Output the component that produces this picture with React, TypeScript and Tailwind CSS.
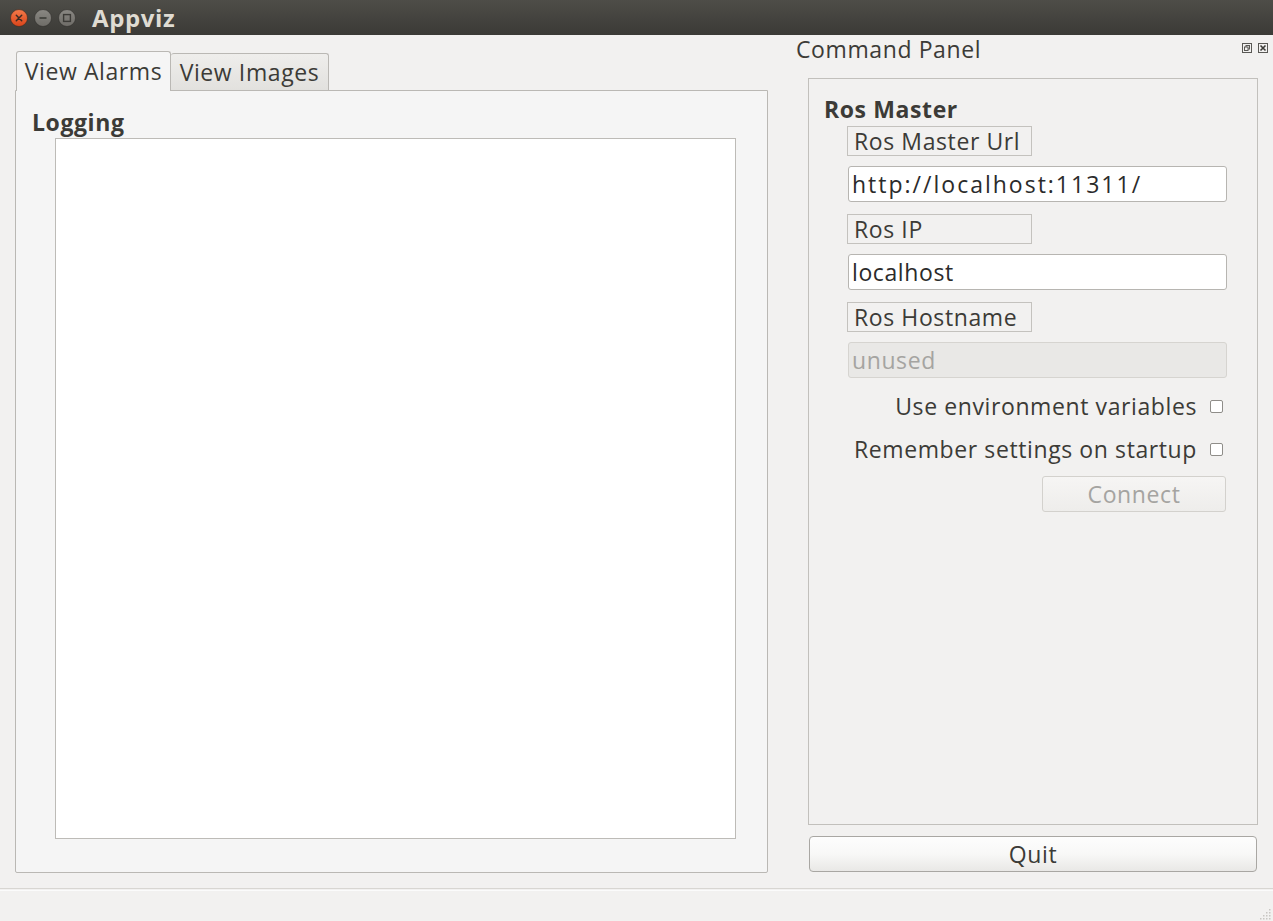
import React from "react";

const font = { fontFamily: '"Open Sans", "Noto Sans", "DejaVu Sans", sans-serif', letterSpacing: "0.6px" };

function TitleButtons() {
  return (
    <div className="flex items-center gap-[6px] pl-[10px]">
      <svg width="18" height="18" viewBox="0 0 18 18">
        <defs>
          <linearGradient id="cl" x1="0" y1="0" x2="0" y2="1">
            <stop offset="0" stopColor="#f47a4a" />
            <stop offset="1" stopColor="#d9441a" />
          </linearGradient>
        </defs>
        <circle cx="9" cy="9" r="8.5" fill="url(#cl)" stroke="#3a2a22" strokeWidth="0.6" />
        <path d="M6.3 6.3 L11.7 11.7 M11.7 6.3 L6.3 11.7" stroke="#3b2b24" strokeWidth="1.5" strokeLinecap="round" />
      </svg>
      <svg width="18" height="18" viewBox="0 0 18 18">
        <defs>
          <linearGradient id="gr" x1="0" y1="0" x2="0" y2="1">
            <stop offset="0" stopColor="#8a8883" />
            <stop offset="1" stopColor="#6e6c67" />
          </linearGradient>
        </defs>
        <circle cx="9" cy="9" r="8.5" fill="url(#gr)" stroke="#2f2e2a" strokeWidth="0.6" />
        <path d="M5.5 9 L12.5 9" stroke="#3c3b37" strokeWidth="1.6" />
      </svg>
      <svg width="18" height="18" viewBox="0 0 18 18">
        <circle cx="9" cy="9" r="8.5" fill="url(#gr)" stroke="#2f2e2a" strokeWidth="0.6" />
        <rect x="5.6" y="5.6" width="6.8" height="6.8" fill="none" stroke="#3c3b37" strokeWidth="1.4" />
      </svg>
    </div>
  );
}

function LabelBox({ text }: { text: string }) {
  return (
    <div className="ml-[38px] w-[185px] h-[30px] border border-[#c4c2be] flex items-center pl-[6px] text-[23px] text-[#3c3b37] leading-none">
      {text}
    </div>
  );
}

function Field({ value, disabled, spacing }: { value: string; disabled?: boolean; spacing?: string }) {
  return (
    <input
      readOnly
      value={value}
      disabled={disabled}
      className={
        "ml-[39px] w-[379px] h-[36px] rounded-[3px] border px-[3px] text-[23px] outline-none " +
        (disabled
          ? "bg-[#e9e8e6] border-[#d6d4d0] text-[#a5a4a1]"
          : "bg-white border-[#b7b5b1] text-[#2b2b2b]")
      }
      style={{ ...font, letterSpacing: spacing ?? font.letterSpacing }}
    />
  );
}

function CheckRow({ text }: { text: string }) {
  return (
    <div className="flex items-center justify-end pr-[34px] h-[30px]">
      <span className="text-[23px] text-[#3c3b37] leading-none">{text}</span>
      <span className="ml-[13px] w-[13px] h-[13px] rounded-[2px] border border-[#8f8d89] bg-white" />
    </div>
  );
}

export default function App() {
  return (
    <div className="w-[1273px] h-[921px] flex flex-col bg-[#f2f1f0] overflow-hidden" style={font}>
      {/* Title bar */}
      <div className="h-[35px] shrink-0 flex items-center bg-gradient-to-b from-[#4e4d48] to-[#3b3a36]">
        <TitleButtons />
        <span className="ml-[16px] text-[24px] font-bold text-[#dfdbd2] leading-none">Appviz</span>
      </div>

      {/* Main */}
      <div className="flex flex-1 min-h-0">
        {/* Left: tabs */}
        <div className="w-[768px] shrink-0 pl-[15px] pt-[16px] flex flex-col">
          <div className="flex items-end h-[39px]">
            <div className="relative z-10 -mb-px ml-px h-[40px] w-[155px] rounded-t-[3px] border border-b-0 border-[#bab8b4] bg-[#f5f5f5] flex items-center justify-center text-[23px] text-[#3c3b37] leading-none">
              View Alarms
            </div>
            <div className="h-[37px] w-[158px] rounded-t-[3px] border border-l-0 border-b-0 border-[#bab8b4] bg-gradient-to-b from-[#efeeec] to-[#e2e1de] flex items-center justify-center text-[23px] text-[#3c3b37] leading-none">
              View Images
            </div>
          </div>
          <div className="h-[783px] border border-[#bab8b4] rounded-b-[2px] bg-[#f5f5f5] flex flex-col">
            <div className="pl-[16px] pt-[20px] h-[47px] text-[23px] font-bold text-[#3c3b37] leading-none">Logging</div>
            <div className="ml-[39px] mr-[31px] h-[701px] bg-white border border-[#bdbbb7]" />
          </div>
        </div>

        {/* Right: command panel dock */}
        <div className="flex-1 flex flex-col">
          <div className="h-[43px] flex items-start">
            <span className="ml-[28px] text-[23px] text-[#3c3b37] leading-[28px]">Command Panel</span>
            <div className="ml-auto mr-[5px] mt-[8px] flex gap-[6px]">
              <svg width="10" height="10" viewBox="0 0 10 10">
                <rect x="0.5" y="0.5" width="9" height="9" fill="none" stroke="#5a5955" />
                <rect x="4" y="2.5" width="3.5" height="3.5" fill="none" stroke="#5a5955" />
                <rect x="2.5" y="4" width="3.5" height="3.5" fill="#f2f1f0" stroke="#5a5955" />
              </svg>
              <svg width="10" height="10" viewBox="0 0 10 10">
                <rect x="0.5" y="0.5" width="9" height="9" fill="none" stroke="#5a5955" />
                <path d="M2.5 2.5 L7.5 7.5 M7.5 2.5 L2.5 7.5" stroke="#3c3b37" strokeWidth="1.6" />
              </svg>
            </div>
          </div>
          <div className="ml-[40px] mr-[15px] h-[747px] border border-[#c2c0bc] flex flex-col">
            <div className="pl-[15px] pt-[19px] h-[47px] text-[23px] font-bold text-[#3c3b37] leading-none">Ros Master</div>
            <LabelBox text="Ros Master Url" />
            <div className="h-[10px]" />
            <Field value="http://localhost:11311/" spacing="2px" />
            <div className="h-[12px]" />
            <LabelBox text="Ros IP" />
            <div className="h-[10px]" />
            <Field value="localhost" />
            <div className="h-[12px]" />
            <LabelBox text="Ros Hostname" />
            <div className="h-[10px]" />
            <Field value="unused" disabled />
            <div className="h-[13px]" />
            <CheckRow text="Use environment variables" />
            <div className="h-[13px]" />
            <CheckRow text="Remember settings on startup" />
            <div className="h-[12px]" />
            <div className="flex justify-end pr-[31px]">
              <div className="w-[184px] h-[36px] rounded-[3px] border border-[#d3d1cd] bg-gradient-to-b from-[#f6f5f4] to-[#eeedeb] flex items-center justify-center text-[23px] text-[#a5a4a1] leading-none">
                Connect
              </div>
            </div>
          </div>
          <div className="ml-[41px] mr-[16px] mt-[11px] h-[36px] rounded-[4px] border border-[#a9a7a3] bg-gradient-to-b from-[#fdfdfd] via-[#f8f8f7] to-[#e9e8e6] flex items-center justify-center text-[23px] text-[#3c3b37] leading-none">
            Quit
          </div>
        </div>
      </div>

      {/* Status bar */}
      <div className="h-[33px] shrink-0 border-t border-[#d8d6d2] relative">
        <div className="absolute top-px left-0 right-0 h-px bg-white/70" />
        <svg className="absolute right-[1px] bottom-[1px]" width="12" height="12" viewBox="0 0 12 12">
          {[
            [10, 2], [10, 5], [7, 5], [10, 8], [7, 8], [4, 8], [10, 11], [7, 11], [4, 11], [1, 11],
          ].map(([x, y], i) => (
            <rect key={i} x={x - 1} y={y - 1} width="1.5" height="1.5" fill="#c8c6c2" />
          ))}
        </svg>
      </div>
    </div>
  );
}
